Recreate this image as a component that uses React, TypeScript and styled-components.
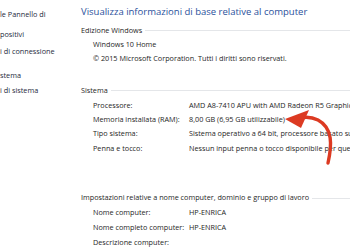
import { createGlobalStyle, styled } from "styled-components";

const GlobalStyle = createGlobalStyle`
  html, body {
    margin: 0;
    padding: 0;
    background: #fff;
  }
  body {
    width: 350px;
    height: 250px;
    overflow: hidden;
    font-family: "Open Sans", "Noto Sans", sans-serif;
    color: #1e1e1e;
  }
`;

const nav = [
  { text: "le Pannello di", gap: 8 },
  { text: "positivi", gap: 8 },
  { text: "i di connessione", gap: 5 },
  { text: "stema", gap: 12 },
  { text: "i di sistema", gap: 3 },
];

const system = [
  ["Processore:", "AMD A8-7410 APU with AMD Radeon R5 Graphics     2.20 GHz"],
  ["Memoria installata (RAM):", "8,00 GB (6,95 GB utilizzabile)"],
  ["Tipo sistema:", "Sistema operativo a 64 bit, processore basato su x64"],
  ["Penna e tocco:", "Nessun input penna o tocco disponibile per questo schermo"],
];

const computer = [
  ["Nome computer:", "HP-ENRICA"],
  ["Nome completo computer:", "HP-ENRICA"],
  ["Descrizione computer:", ""],
];

const App = () => {
  return (
    <>
      <GlobalStyle />
      <Page>
        <Nav>
          {nav.map((item) => (
            <NavItem key={item.text} $gap={item.gap}>
              {item.text}
            </NavItem>
          ))}
        </Nav>
        <Main>
          <Title>Visualizza informazioni di base relative al computer</Title>

          <SectionHeader $gap={5}>
            <span>Edizione Windows</span>
          </SectionHeader>
          <Row $gap={1} $h={14.5}>
            <span>Windows 10 Home</span>
          </Row>
          <Row $h={14.5}>
            <span>© 2015 Microsoft Corporation. Tutti i diritti sono riservati.</span>
          </Row>

          <SectionHeader $gap={18}>
            <span>Sistema</span>
          </SectionHeader>
          {system.map(([label, value], i) => (
            <InfoRow key={label} $gap={i === 0 ? 2 : 0} $h={14.4}>
              <span>{label}</span>
              <span>{value}</span>
            </InfoRow>
          ))}

          <SectionHeader $gap={36}>
            <span>Impostazioni relative a nome computer, dominio e gruppo di lavoro</span>
          </SectionHeader>
          {computer.map(([label, value], i) => (
            <InfoRow key={label} $gap={i === 0 ? 2 : 0} $h={15}>
              <span>{label}</span>
              <span>{value}</span>
            </InfoRow>
          ))}
        </Main>

        <Arrow viewBox="0 0 350 250" width="350" height="250">
          <path
            d="M328 163 C 332 145, 333 128, 318 120 C 310 116, 302 117, 296 119"
            fill="none"
            stroke="#dc3a22"
            strokeWidth="3.4"
            strokeLinecap="round"
          />
          <polygon points="285,119 309,110 301,128" fill="#dc3a22" />
        </Arrow>
      </Page>
    </>
  );
};

export default App;

const Page = styled.div`
  position: relative;
  display: flex;
  width: 350px;
  height: 250px;
  overflow: hidden;
`;

const Nav = styled.nav`
  width: 81px;
  flex-shrink: 0;
  display: flex;
  flex-direction: column;
  overflow: hidden;
  font-size: 7.3px;
  color: #1e2a3c;
`;

const NavItem = styled.div<{ $gap: number }>`
  height: 12px;
  line-height: 12px;
  margin-top: ${(p) => p.$gap}px;
  white-space: nowrap;
`;

const Main = styled.main`
  flex: 1;
  min-width: 0;
  padding-top: 5px;
  display: flex;
  flex-direction: column;
  white-space: nowrap;
  font-size: 7.25px;
`;

const Title = styled.h1`
  margin: 0;
  height: 14px;
  line-height: 14px;
  font-size: 9.5px;
  font-weight: 400;
  color: #2a519c;
`;

const SectionHeader = styled.div<{ $gap: number }>`
  display: flex;
  align-items: center;
  gap: 3px;
  height: 12px;
  margin-top: ${(p) => p.$gap}px;

  &::after {
    content: "";
    flex: 1;
    height: 1px;
    margin-top: 2px;
    background: #e4e6e9;
  }
`;

const Row = styled.div<{ $gap?: number; $h: number }>`
  height: ${(p) => p.$h}px;
  line-height: ${(p) => p.$h}px;
  margin-top: ${(p) => p.$gap ?? 0}px;
  padding-left: 12px;
`;

const InfoRow = styled(Row)`
  display: grid;
  grid-template-columns: 96px auto;
`;

const Arrow = styled.svg`
  position: absolute;
  left: 0;
  top: 0;
  pointer-events: none;
`;
